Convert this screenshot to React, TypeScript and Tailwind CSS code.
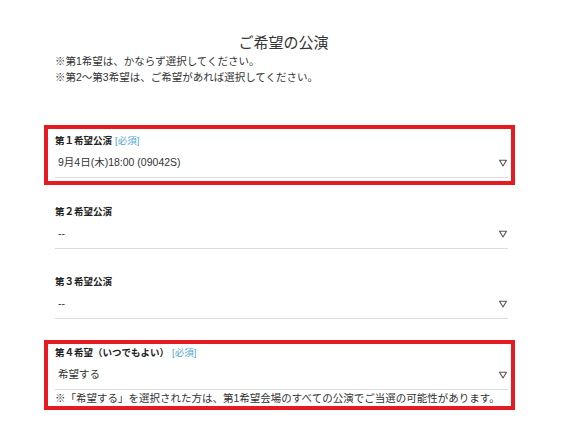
const font = { fontFamily: '"Liberation Sans", "Noto Sans CJK JP", sans-serif' }

function Caret() {
  return (
    <svg width="10" height="8" viewBox="0 0 10 8" className="shrink-0">
      <path d="M1.5 1.2 H8.5 L5 7 Z" fill="none" stroke="#555" strokeWidth="1.1" strokeLinejoin="round" />
    </svg>
  )
}

type FieldProps = {
  label: string
  required?: boolean
  value: string
  highlight?: boolean
  note?: string
  className?: string
}

function Field({ label, required, value, highlight, note, className }: FieldProps) {
  return (
    <div
      className={`border-4 pl-[7px] pr-[3px] ${
        highlight ? 'border-[#e61b22]' : 'border-transparent'
      } ${className ?? ''}`}
    >
      <div className="flex items-center h-[14px] text-[9.5px] text-[#222]">
        <span className="font-bold">{label}</span>
        {required ? <span className="ml-[3px] text-[#4ea6cc]">[必須]</span> : null}
      </div>
      <div className="flex items-center justify-between h-[30px] border-b border-[#dcdcdc] pl-[3px]">
        <span className="text-[10.5px] text-[#333]">{value}</span>
        <Caret />
      </div>
      {note ? (
        <p className="text-[10.5px] leading-[16px] text-[#333] whitespace-nowrap">{note}</p>
      ) : null}
    </div>
  )
}

export default function App() {
  return (
    <div className="min-h-screen bg-white" style={font}>
      <div className="ml-[44px] w-[471px] pt-[33px]">
        <h2 className="text-[15px] leading-[20px] text-[#333] text-center pl-[8px]">ご希望の公演</h2>
        <div className="pl-[11px] text-[10.5px] leading-[16px] text-[#333]">
          <p>※第1希望は、かならず選択してください。</p>
          <p>※第2～第3希望は、ご希望があれば選択してください。</p>
        </div>
        <div className="mt-[40px] flex flex-col">
          <Field
            label="第１希望公演"
            required
            value="9月4日(木)18:00 (09042S)"
            highlight
            className="pt-[5px] pb-[3px]"
          />
          <Field label="第２希望公演" value="--" className="mt-[11px] pt-[5px] pb-[3px]" />
          <Field label="第３希望公演" value="--" className="mt-[10px] pt-[5px] pb-[3px]" />
          <Field
            label="第４希望（いつでもよい）"
            required
            value="希望する"
            highlight
            note="※「希望する」を選択された方は、第1希望会場のすべての公演でご当選の可能性があります。"
            className="mt-[14px] pt-[2px] pb-0"
          />
        </div>
      </div>
    </div>
  )
}
